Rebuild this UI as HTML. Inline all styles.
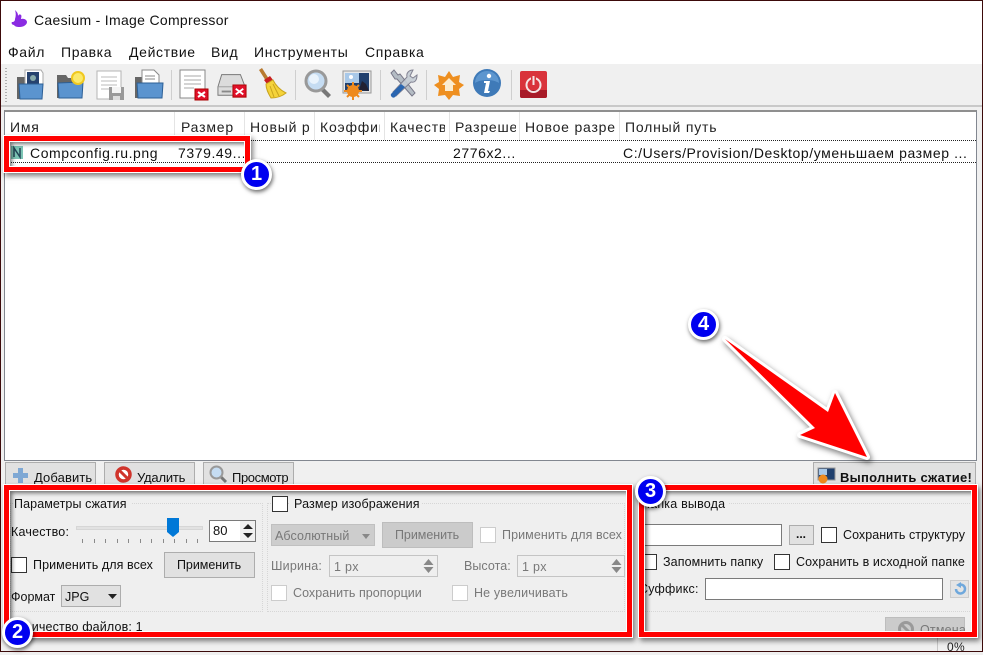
<!DOCTYPE html>
<html lang="ru"><head><meta charset="utf-8"><title>Caesium - Image Compressor</title>
<style>
html,body{margin:0;padding:0}
body{width:983px;height:652px;overflow:hidden;position:relative;background:#f0f0f0;font-family:"Liberation Sans",sans-serif;color:#111}
.a{position:absolute;box-sizing:border-box}
.t{position:absolute;white-space:nowrap;line-height:16px;font-size:13px;overflow:hidden}
.m{font-size:14px;letter-spacing:.65px;top:44px}
.h{font-size:14px;letter-spacing:.8px;top:119px;overflow:hidden;color:#222}
.hs{position:absolute;top:112px;width:1px;height:28px;background:#e4e4e4}
.r{font-size:14px;top:145px;letter-spacing:.58px}
.btn{position:absolute;box-sizing:border-box;background:#e1e1e1;border:1px solid #adadad}
.cb{position:absolute;box-sizing:border-box;width:16px;height:16px;background:#fff;border:1px solid #333}
.cb.d{border-color:#ccc}
.g{color:#787878}
.inp{position:absolute;box-sizing:border-box;background:#fff;border:1px solid #7a7a7a}
.inp.d{background:#efefef;border-color:#c4c4c4}
.box{position:absolute;box-sizing:border-box;border:5px solid #f00;outline:1px solid #fff;box-shadow:0 0 0 1px #fff,2px 3px 5px 1px rgba(0,0,0,.5),inset 0 0 0 1px #fff,inset 3px 3px 4px rgba(0,0,0,.55)}
svg{position:absolute;overflow:visible}
.tb{top:68px;width:30px;height:32px}
.sep{position:absolute;top:70px;width:1px;height:30px;background:#cfcfcf}
.badge{position:absolute;box-sizing:border-box;width:31px;height:31px;border-radius:50%;background:#0000f0;border:3px solid #fff;box-shadow:1px 2px 4px rgba(0,0,0,.6);color:#fff;font:bold 20px/25px "Liberation Sans",sans-serif;text-align:center}
.tick{position:absolute;top:539px;width:1px;height:4px;background:#8a8a8a}
</style></head><body>
<div class="a" style="left:0;top:0;width:983px;height:40px;background:#fff"></div>
<div class="a" style="left:0;top:40px;width:983px;height:24px;background:#fff"></div>
<div class="a" style="left:0;top:64px;width:983px;height:42px;background:#f0f0f0"></div>
<div class="a" style="left:0;top:105px;width:983px;height:2px;background:#c9c9c9"></div>

<svg style="left:11px;top:10px" width="18" height="20" viewBox="0 0 18 20"><path d="M4 0c2 2 3 3 3 6 1-2 2-2 3-1 1 1 0 3 0 4 3-1 6 1 6 3 0 3-4 5-7 5-2 0-5 0-6-2-2 0-3-2-2-3 2 0 3-1 3-3 1-3 1-6 0-9z" fill="#8a2be2"/></svg>
<div class="t" style="left:34px;top:12px;font-size:14px;letter-spacing:.31px">Caesium - Image Compressor</div>
<div class="t m" style="left:8px">Файл</div>
<div class="t m" style="left:61px">Правка</div>
<div class="t m" style="left:129px">Действие</div>
<div class="t m" style="left:211px">Вид</div>
<div class="t m" style="left:254px">Инструменты</div>
<div class="t m" style="left:365px">Справка</div>

<!-- toolbar -->
<div class="a" style="left:5px;top:68px;width:2px;height:34px;background:repeating-linear-gradient(#b0b0b0 0 1px,transparent 1px 3px)"></div>
<svg class="tb" style="left:15px" viewBox="0 0 30 32"><path d="M2 9h8v22H2z" fill="#666"/><path d="M10 2h16l2 3v12H10z" fill="#fff" stroke="#aaa"/><path d="M12 4h12v13H12z" fill="#26426e"/><circle cx="18" cy="10" r="3" fill="#8aa"/><path d="M4 16h24l-1 15H5z" fill="#5b94cf" stroke="#2c5f96"/></svg>
<svg class="tb" style="left:55px" viewBox="0 0 30 32"><path d="M2 7h9l2 3h8v20H2z" fill="#666"/><path d="M3 15l25-1-1 16H4z" fill="#5b94cf" stroke="#2c5f96"/><circle cx="23" cy="10" r="6" fill="#fbe96a" stroke="#f0c820" stroke-width="2"/></svg>
<svg class="tb" style="left:95px" viewBox="0 0 30 32"><path d="M2 3h24v28H2z" fill="#fff" stroke="#b5b5b5"/><path d="M6 9h16M6 13h16M6 17h16M6 21h8" stroke="#bbb"/><path d="M14 19h15v13H14z" fill="#999"/><path d="M17 19h9v6h-9z" fill="#f4f4f4"/><path d="M18 28h7v4h-7z" fill="#ddd"/></svg>
<svg class="tb" style="left:133px" viewBox="0 0 30 32"><path d="M2 9h8v21H2z" fill="#666"/><path d="M9 2h12l5 5v11H9z" fill="#fff" stroke="#888"/><path d="M12 8h10M12 11h10" stroke="#888"/><path d="M4 15h26l-1 15H5z" fill="#5b94cf" stroke="#2c5f96"/></svg>
<div class="sep" style="left:171px"></div>
<svg class="tb" style="left:179px" viewBox="0 0 30 32"><path d="M1 2h25v28H1z" fill="#fff" stroke="#888"/><path d="M5 8h17M5 12h17M5 16h17M5 20h10" stroke="#aaa"/><path d="M16 21h13v11H16z" fill="#e0102a" stroke="#a00"/><path d="M19 24l7 5M26 24l-7 5" stroke="#fff" stroke-width="2"/></svg>
<svg class="tb" style="left:217px" viewBox="0 0 32 32"><path d="M5 6h20l5 13v9H1v-9z" fill="#dcdcdc" stroke="#777"/><path d="M1 19h29" stroke="#999"/><path d="M5 23h10v2H5z" fill="#888"/><path d="M17 17h14v13H17z" fill="#e0102a" stroke="#a00"/><path d="M20 21l8 6M28 21l-8 6" stroke="#fff" stroke-width="2"/></svg>
<svg class="tb" style="left:258px" viewBox="0 0 30 32"><path d="M1 2l3-2 7 11-3 2z" fill="#b87a30"/><path d="M6 12l6-4 3 4-6 4z" fill="#c82020"/><path d="M8 16l7-4c3 6 7 10 13 13-5 4-11 5-15 5C10 25 8 21 8 16z" fill="#f5d33a" stroke="#c9a41e"/><path d="M12 18l4 11M15 16l6 12" stroke="#c9a41e"/></svg>
<div class="sep" style="left:295px"></div>
<svg class="tb" style="left:303px" viewBox="0 0 30 32"><path d="M20 19l8 8-3 3-8-8z" fill="#777"/><circle cx="13" cy="13" r="10" fill="#c5dcf2" stroke="#999" stroke-width="3"/><circle cx="11" cy="11" r="5" fill="#e9f3fc"/></svg>
<svg class="tb" style="left:342px" viewBox="0 0 30 32"><path d="M1 3h28v22H1z" fill="#e8e8e8" stroke="#999"/><path d="M3 5h24v18H3z" fill="#20406e"/><path d="M3 5h14v10H3z" fill="#a8c8e8"/><circle cx="9" cy="9" r="2" fill="#fff"/><path d="M17 22l3-9 4 3 3 7z" fill="#223"/><circle cx="11" cy="23" r="6" fill="#ee8a1e"/><path d="M11 14v18M2 23h18M5 17l12 12M17 17L5 29" stroke="#ee8a1e" stroke-width="2"/></svg>
<div class="sep" style="left:380px"></div>
<svg class="tb" style="left:388px" viewBox="0 0 30 32"><path d="M3 5l3-3 4 5 2-1 15 19-3 3L9 11H7z" fill="#b4bcc4" stroke="#778"/><path d="M25 2c-4 0-7 3-6 7L5 24l3 4 15-14c4 1 6-2 6-7l-4 3-3-2z" fill="#c4ccd4" stroke="#778" opacity=".9"/><path d="M13 16L3 26c-1 2 2 5 4 3l10-10z" fill="#2a66b0"/></svg>
<div class="sep" style="left:426px"></div>
<svg class="tb" style="left:434px" viewBox="0 0 30 32"><path d="M15 3l4 6 7-2-1 7 5 3-5 4 1 7-7-1-4 5-4-5-7 1 1-7-5-4 5-3-1-7 7 2z" fill="#ee8f20"/><path d="M15 10l7 7h-3v6h-8v-6H8z" fill="#fbecd0"/></svg>
<svg class="tb" style="left:473px" viewBox="0 0 30 32"><circle cx="14" cy="15" r="14" fill="#3f7ab8"/><path d="M2 15a12 12 0 0 1 24 0c-6-4-18-4-24 0z" fill="#5d96cf"/><circle cx="16" cy="8" r="2.200" fill="#fff"/><path d="M11 13h6l-2 10h2l-1 2h-5l2-10h-2z" fill="#fff"/></svg>
<div class="sep" style="left:511px"></div>
<svg class="tb" style="left:520px" viewBox="0 0 30 32"><rect x="0" y="3" width="27" height="27" rx="2" fill="#d9333b"/><path d="M0 22h27v6a2 2 0 0 1-2 2H2a2 2 0 0 1-2-2z" fill="#a81b28"/><circle cx="13.500" cy="17" r="7" fill="none" stroke="#f4e4e4" stroke-width="2"/><path d="M13.500 8v9" stroke="#d9333b" stroke-width="5"/><path d="M13.500 8v9" stroke="#f4e4e4" stroke-width="2"/></svg>

<!-- table -->
<div class="a" style="left:4px;top:110px;width:973px;height:351px;background:#fff;border:1px solid #828790;border-top:2px solid #8f8f8f"></div>
<div class="t h" style="left:10px;width:160px">Имя</div>
<div class="t h" style="left:181px;width:62px">Размер</div>
<div class="t h" style="left:250px;width:61px">Новый р</div>
<div class="t h" style="left:320px;width:60px">Коэффиц</div>
<div class="t h" style="left:390px;width:55px">Качеств</div>
<div class="t h" style="left:455px;width:61px">Разреше</div>
<div class="t h" style="left:525px;width:90px">Новое разре</div>
<div class="t h" style="left:625px;width:200px">Полный путь</div>
<div class="hs" style="left:174px"></div><div class="hs" style="left:244px"></div><div class="hs" style="left:314px"></div><div class="hs" style="left:384px"></div><div class="hs" style="left:449px"></div><div class="hs" style="left:519px"></div><div class="hs" style="left:619px"></div>
<div class="a" style="left:6px;top:140px;width:970px;height:23px;border-top:1px dotted #222;border-bottom:1px dotted #222"></div>
<svg style="left:11px;top:146px" width="12" height="13" viewBox="0 0 12 13"><rect width="12" height="13" fill="#7cc4b4"/><path d="M3 11V2l6 9V2" fill="none" stroke="#245" stroke-width="1.500"/></svg>
<div class="t r" style="left:30px">Compconfig.ru.png</div>
<div class="t r" style="left:178px">7379.49...</div>
<div class="t r" style="left:453px">2776x2...</div>
<div class="t r" style="left:623px;width:350px">C:/Users/Provision/Desktop/уменьшаем размер ...</div>

<!-- bottom buttons -->
<div class="btn" style="left:5px;top:462px;width:91px;height:30px"></div>
<div class="btn" style="left:104px;top:462px;width:91px;height:30px"></div>
<div class="btn" style="left:203px;top:462px;width:91px;height:30px"></div>
<div class="btn" style="left:813px;top:462px;width:163px;height:30px"></div>
<svg style="left:13px;top:468px" width="15" height="15" viewBox="0 0 15 15"><path d="M5 0h5v5h5v5h-5v5H5v-5H0V5h5z" fill="#7fa8d4"/></svg>
<div class="t" style="left:34px;top:470px;letter-spacing:.1px">Добавить</div>
<svg style="left:115px;top:466px" width="17" height="17" viewBox="0 0 17 17"><circle cx="8.500" cy="8.500" r="6.500" fill="#fff" stroke="#d0342c" stroke-width="3.500"/><path d="M4 4l9 9" stroke="#d0342c" stroke-width="3"/></svg>
<div class="t" style="left:137px;top:470px;letter-spacing:-.2px">Удалить</div>
<svg style="left:209px;top:465px" width="18" height="18" viewBox="0 0 18 18"><path d="M11 11l6 6" stroke="#777" stroke-width="3"/><circle cx="7.500" cy="7.500" r="6" fill="#c5dcf2" stroke="#999" stroke-width="2"/></svg>
<div class="t" style="left:232px;top:470px;letter-spacing:-.4px">Просмотр</div>
<svg style="left:817px;top:468px" width="18" height="16" viewBox="0 0 18 16"><path d="M1 0h17v12H1z" fill="#20406e" stroke="#999"/><path d="M2 1h8v6H2z" fill="#a8c8e8"/><circle cx="6" cy="11" r="4.500" fill="#ee8a1e"/></svg>
<div class="t" style="left:840px;top:470px;font-weight:bold;letter-spacing:.25px">Выполнить сжатие!</div>

<!-- panel -->
<div class="a" style="left:9px;top:490px;width:618px;height:143px;background:#efefef"></div>
<div class="a" style="left:644px;top:490px;width:328px;height:141px;background:#efefef"></div>

<div class="a" style="left:10px;top:503px;width:253px;height:109px;border:1px dotted #d6d6d6"></div>
<div class="a" style="left:267px;top:503px;width:358px;height:109px;border:1px dotted #d6d6d6"></div>
<div class="a" style="left:14px;top:497px;width:118px;height:12px;background:#efefef"></div>
<div class="t" style="left:14px;top:496px;font-size:12.500px;letter-spacing:.1px">Параметры сжатия</div>
<div class="t" style="left:11px;top:524px;font-size:12.500px;letter-spacing:.2px">Качество:</div>
<div class="a" style="left:76px;top:526px;width:127px;height:4px;background:#e2e2e2;border:1px solid #d6d6d6"></div>
<svg style="left:167px;top:518px" width="12" height="19" viewBox="0 0 12 19"><path d="M0 0h12v14l-6 5-6-5z" fill="#0078d7"/></svg>
<div class="tick" style="left:82px"></div><div class="tick" style="left:94px"></div><div class="tick" style="left:105px"></div><div class="tick" style="left:117px"></div><div class="tick" style="left:128px"></div><div class="tick" style="left:140px"></div><div class="tick" style="left:151px"></div><div class="tick" style="left:163px"></div><div class="tick" style="left:174px"></div><div class="tick" style="left:186px"></div><div class="tick" style="left:197px"></div>
<div class="inp" style="left:209px;top:520px;width:47px;height:22px"></div>
<div class="t" style="left:213px;top:523px;font-size:13px">80</div>
<div class="a" style="left:240px;top:521px;width:15px;height:20px;background:#f0f0f0"></div>
<svg style="left:242px;top:523px" width="12" height="16" viewBox="0 0 12 16"><path d="M6 1l5 5H1zM1 10h10l-5 5z" fill="#222"/></svg>
<div class="cb" style="left:11px;top:557px"></div>
<div class="t" style="left:33px;top:557px;font-size:12.500px;letter-spacing:.08px">Применить для всех</div>
<div class="btn" style="left:164px;top:552px;width:91px;height:26px"></div>
<div class="t" style="left:177px;top:557px;font-size:12.500px;letter-spacing:-.05px">Применить</div>
<div class="t" style="left:11px;top:589px;font-size:12.500px">Формат</div>
<div class="btn" style="left:61px;top:585px;width:60px;height:22px"></div>
<div class="t" style="left:65px;top:589px;font-size:12.500px">JPG</div>
<svg style="left:108px;top:594px" width="9" height="5" viewBox="0 0 9 5"><path d="M0 0h9L4.500 5z" fill="#222"/></svg>
<div class="a" style="left:9px;top:490px;width:618px;height:143px;overflow:hidden"><div class="t" style="left:1px;top:129px;font-size:12.500px;letter-spacing:.15px">Количество файлов: 1</div></div>

<div class="cb" style="left:272px;top:496px"></div>
<div class="a" style="left:290px;top:497px;width:132px;height:12px;background:#efefef"></div>
<div class="t" style="left:294px;top:496px;font-size:12.500px;letter-spacing:.15px">Размер изображения</div>
<div class="a" style="left:271px;top:524px;width:104px;height:22px;background:#cdcdcd;border:1px solid #c0c0c0"></div>
<div class="t g" style="left:275px;top:528px;font-size:12.500px;letter-spacing:.1px">Абсолютный</div>
<svg style="left:362px;top:534px" width="8" height="5" viewBox="0 0 8 5"><path d="M0 0h8L4 5z" fill="#888"/></svg>
<div class="a" style="left:382px;top:522px;width:91px;height:26px;background:#cbcbcb;border:1px solid #bdbdbd"></div>
<div class="t g" style="left:395px;top:527px;font-size:12.500px;letter-spacing:-.05px">Применить</div>
<div class="cb d" style="left:480px;top:527px"></div>
<div class="t g" style="left:502px;top:527px;font-size:12.500px;letter-spacing:.08px">Применить для всех</div>
<div class="t g" style="left:271px;top:558px;font-size:12.500px;letter-spacing:.2px">Ширина:</div>
<div class="inp d" style="left:329px;top:555px;width:109px;height:22px"></div>
<div class="t g" style="left:334px;top:559px;font-size:12.500px;letter-spacing:.3px">1 px</div>
<svg style="left:423px;top:558px" width="11" height="16" viewBox="0 0 11 16"><path d="M5.500 1l5 6H.5zM.5 9h10l-5 6z" fill="#888"/></svg>
<div class="t g" style="left:464px;top:558px;font-size:12.500px;letter-spacing:.05px">Высота:</div>
<div class="inp d" style="left:517px;top:555px;width:108px;height:22px"></div>
<div class="t g" style="left:522px;top:559px;font-size:12.500px;letter-spacing:.3px">1 px</div>
<svg style="left:611px;top:558px" width="11" height="16" viewBox="0 0 11 16"><path d="M5.500 1l5 6H.5zM.5 9h10l-5 6z" fill="#888"/></svg>
<div class="cb d" style="left:271px;top:585px"></div>
<div class="t g" style="left:293px;top:585px;font-size:12.500px;letter-spacing:.04px">Сохранить пропорции</div>
<div class="cb d" style="left:452px;top:585px"></div>
<div class="t g" style="left:474px;top:585px;font-size:12.500px;letter-spacing:.15px">Не увеличивать</div>

<!-- right -->
<div class="a" style="left:644px;top:490px;width:328px;height:141px;overflow:hidden">
<div class="a" style="left:0;top:13px;width:328px;height:109px;border-top:1px dotted #d6d6d6;border-bottom:1px dotted #d6d6d6"></div>
<div class="a" style="left:0;top:7px;width:84px;height:12px;background:#efefef"></div>
<div class="t" style="left:-3px;top:6px;font-size:12.500px;letter-spacing:.2px">Папка вывода</div>
<div class="inp" style="left:-8px;top:34px;width:146px;height:22px"></div>
<div class="btn" style="left:145px;top:35px;width:25px;height:20px"></div>
<div class="t" style="left:152px;top:36px;font-weight:bold;font-size:12px">...</div>
<div class="cb" style="left:177px;top:37px"></div>
<div class="t" style="left:199px;top:37px;font-size:12.500px;letter-spacing:.04px">Сохранить структуру</div>
<div class="cb" style="left:-3px;top:64px"></div>
<div class="t" style="left:19px;top:64px;font-size:12.500px;letter-spacing:.1px">Запомнить папку</div>
<div class="cb" style="left:130px;top:64px"></div>
<div class="t" style="left:152px;top:64px;font-size:12.500px;letter-spacing:.1px">Сохранить в исходной папке</div>
<div class="t" style="left:-5px;top:91px;font-size:12.500px;letter-spacing:.2px">Суффикс:</div>
<div class="inp" style="left:61px;top:88px;width:238px;height:22px"></div>
<div class="a" style="left:306px;top:90px;width:19px;height:18px;background:#e4e4e4;border:1px solid #ccc"></div>
<svg style="left:309px;top:92px" width="14" height="14" viewBox="0 0 14 14"><path d="M3 7a4.500 4.500 0 1 0 4-4.500" fill="none" stroke="#6fa8dc" stroke-width="2.500"/><path d="M8 0v6L3 3z" fill="#6fa8dc"/></svg>
<div class="a" style="left:241px;top:127px;width:80px;height:26px;background:#cbcbcb;border:1px solid #bdbdbd"></div>
<svg style="left:253px;top:130px" width="18" height="18" viewBox="0 0 18 18"><circle cx="9" cy="9" r="6.500" fill="none" stroke="#9a9a9a" stroke-width="3"/><path d="M4 4l10 10" stroke="#9a9a9a" stroke-width="3"/></svg>
<div class="t g" style="left:276px;top:132px;font-size:12.500px;letter-spacing:.2px">Отмена</div>
</div>

<div class="a" style="left:937px;top:638px;width:1px;height:13px;background:#c8c8c8"></div>
<div class="t" style="left:947px;top:639px;font-size:12px;letter-spacing:.3px;color:#222">0%</div>

<!-- annotations -->
<div class="box" style="left:4px;top:136px;width:246px;height:36px"></div>
<div class="box" style="left:4px;top:485px;width:628px;height:152px"></div>
<div class="box" style="left:639px;top:485px;width:338px;height:152px"></div>
<svg style="left:0;top:0;filter:drop-shadow(2px 3px 3px rgba(0,0,0,.5))" width="983" height="652" viewBox="0 0 983 652"><path d="M725 339L828 412 835 393 867 457 800 435 815 428z" fill="#f00" stroke="#fff" stroke-width="6" stroke-linejoin="round" paint-order="stroke"/></svg>
<div class="badge" style="left:241px;top:159px">1</div>
<div class="badge" style="left:2px;top:617px">2</div>
<div class="badge" style="left:635px;top:476px">3</div>
<div class="badge" style="left:688px;top:309px">4</div>

<!-- window frame -->
<div class="a" style="left:0;top:0;width:983px;height:652px;border:1px solid #3c0a0a;pointer-events:none"></div>
</body></html>
